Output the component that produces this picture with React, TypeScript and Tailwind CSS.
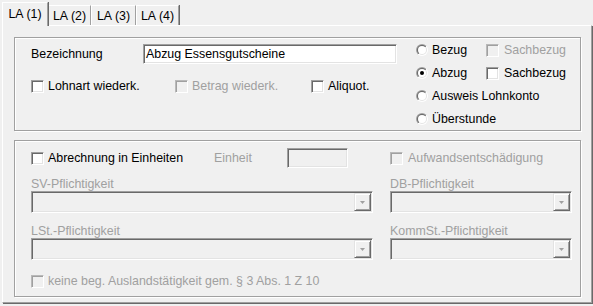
import React from "react";

const Check = ({ disabled = false }: { disabled?: boolean }) => (
  <span
    className={
      disabled
        ? "inline-block shrink-0 w-[13px] h-[13px] border border-t-[#b9b9b9] border-l-[#b9b9b9] border-r-white border-b-white shadow-[inset_1px_1px_0_#a0a0a0] bg-[#f0f0f0]"
        : "inline-block shrink-0 w-[13px] h-[13px] border border-t-[#a0a0a0] border-l-[#a0a0a0] border-r-white border-b-white shadow-[inset_1px_1px_0_#696969,inset_-1px_-1px_0_#e3e3e3] bg-white"
    }
  />
);

const Radio = ({ checked = false, id }: { checked?: boolean; id: string }) => (
  <svg width="12" height="12" viewBox="0 0 12 12" className="shrink-0">
    <defs>
      <linearGradient id={`o${id}`} x1="0" y1="0" x2="1" y2="1">
        <stop offset="0.5" stopColor="#a0a0a0" />
        <stop offset="0.5" stopColor="#ffffff" />
      </linearGradient>
      <linearGradient id={`i${id}`} x1="0" y1="0" x2="1" y2="1">
        <stop offset="0.5" stopColor="#696969" />
        <stop offset="0.5" stopColor="#e3e3e3" />
      </linearGradient>
    </defs>
    <circle cx="6" cy="6" r="6" fill={`url(#o${id})`} />
    <circle cx="6" cy="6" r="5" fill={`url(#i${id})`} />
    <circle cx="6" cy="6" r="4" fill="#ffffff" />
    {checked && <circle cx="6" cy="6" r="2" fill="#000000" />}
  </svg>
);

const Combo = () => (
  <div className="h-[22px] w-full flex justify-end border border-t-[#a0a0a0] border-l-[#a0a0a0] border-r-white border-b-white shadow-[inset_1px_1px_0_#696969,inset_-1px_-1px_0_#e3e3e3] bg-[#f0f0f0] p-[1px]">
    <div className="w-[17px] h-full flex items-center justify-center border border-t-[#e3e3e3] border-l-[#e3e3e3] border-r-[#696969] border-b-[#696969] shadow-[inset_1px_1px_0_#ffffff,inset_-1px_-1px_0_#a0a0a0] bg-[#f0f0f0]">
      <svg width="5" height="3" viewBox="0 0 5 3">
        <path d="M0 0h5L2.5 3z" fill="#a0a0a0" />
      </svg>
    </div>
  </div>
);

const Tab = ({ label, selected = false, w }: { label: string; selected?: boolean; w: string }) => (
  <div
    className={
      selected
        ? `${w} h-[24px] -mb-px relative z-10 bg-[#f0f0f0] border-t border-l border-t-white border-l-white border-r border-r-[#a0a0a0] shadow-[1px_0_0_#696969] flex items-center justify-center pb-[2px]`
        : `${w} h-[20px] bg-[#f0f0f0] border-t border-l border-t-white border-l-white border-r border-r-[#a0a0a0] shadow-[1px_0_0_#696969] flex items-center justify-center`
    }
  >
    {label}
  </div>
);

export default function App() {
  return (
    <div className="w-[593px] h-[306px] bg-[#f0f0f0] font-['Liberation_Sans',Arial,sans-serif] text-[12.4px] leading-[14px] text-black overflow-hidden select-none">
      <div className="h-[25px] flex items-end pl-[2px]">
        <Tab label="LA (1)" selected w="w-[46px]" />
        <Tab label="LA (2)" w="w-[43px]" />
        <Tab label="LA (3)" w="w-[45px]" />
        <Tab label="LA (4)" w="w-[43px]" />
      </div>
      <div className="ml-[2px] w-[590px] h-[278px] border border-t-white border-l-white border-r-[#a0a0a0] border-b-[#a0a0a0] shadow-[1px_1px_0_#696969] pl-[11px] pt-[11px]">
        {/* Group 1 */}
        <div className="w-[567px] h-[94px] border border-[#a0a0a0] shadow-[inset_1px_1px_0_#ffffff,1px_1px_0_#ffffff] flex">
          <div className="pl-[16px] pt-[6px] flex flex-col">
            <div className="h-[20px] flex items-center">
              <span className="w-[112px]">Bezeichnung</span>
              <div className="w-[254px] h-[20px] border border-t-[#a0a0a0] border-l-[#a0a0a0] border-r-white border-b-white shadow-[inset_1px_1px_0_#696969,inset_-1px_-1px_0_#e3e3e3] bg-white flex items-center pl-[2px]">
                Abzug Essensgutscheine
              </div>
            </div>
            <div className="mt-[12px] h-[20px] flex items-center">
              <div className="w-[144px] flex items-center gap-[4px]">
                <Check />
                <span>Lohnart wiederk.</span>
              </div>
              <div className="w-[136px] flex items-center gap-[4px] text-[#a0a0a0]">
                <Check disabled />
                <span>Betrag wiederk.</span>
              </div>
              <div className="flex items-center gap-[4px]">
                <Check />
                <span>Aliquot.</span>
              </div>
            </div>
          </div>
          <div className="ml-[19px] pt-[1px] flex flex-col">
            <div className="h-[23px] flex items-center">
              <Radio id="r1" />
              <span className="ml-[4px] w-[54px]">Bezug</span>
              <Check disabled />
              <span className="ml-[5px] text-[#a0a0a0]">Sachbezug</span>
            </div>
            <div className="h-[23px] flex items-center">
              <Radio id="r2" checked />
              <span className="ml-[4px] w-[54px]">Abzug</span>
              <Check />
              <span className="ml-[5px]">Sachbezug</span>
            </div>
            <div className="h-[23px] flex items-center">
              <Radio id="r3" />
              <span className="ml-[4px]">Ausweis Lohnkonto</span>
            </div>
            <div className="h-[23px] flex items-center">
              <Radio id="r4" />
              <span className="ml-[4px]">Überstunde</span>
            </div>
          </div>
        </div>

        {/* Group 2 */}
        <div className="mt-[9px] w-[567px] h-[157px] border border-[#a0a0a0] shadow-[inset_1px_1px_0_#ffffff,1px_1px_0_#ffffff] pl-[16px] pt-[7px]">
          <div className="h-[20px] flex items-center">
            <div className="w-[183px] flex items-center gap-[4px]">
              <Check />
              <span>Abrechnung in Einheiten</span>
            </div>
            <span className="w-[73px] text-[#a0a0a0]">Einheit</span>
            <div className="w-[61px] h-[20px] border border-t-[#a0a0a0] border-l-[#a0a0a0] border-r-white border-b-white shadow-[inset_1px_1px_0_#696969,inset_-1px_-1px_0_#e3e3e3] bg-[#f0f0f0]" />
            <div className="ml-[42px] flex items-center gap-[5px] text-[#a0a0a0]">
              <Check disabled />
              <span>Aufwandsentschädigung</span>
            </div>
          </div>
          <div className="grid grid-cols-[342px_182px] gap-x-[17px] text-[#a0a0a0]">
            <div className="mt-[9px] h-[14px]">SV-Pflichtigkeit</div>
            <div className="mt-[9px] h-[14px]">DB-Pflichtigkeit</div>
            <Combo />
            <Combo />
            <div className="mt-[11px] h-[14px]">LSt.-Pflichtigkeit</div>
            <div className="mt-[11px] h-[14px]">KommSt.-Pflichtigkeit</div>
            <Combo />
            <Combo />
          </div>
          <div className="mt-[14px] h-[14px] flex items-center gap-[4px] text-[#a0a0a0]">
            <Check disabled />
            <span>keine beg. Auslandstätigkeit gem. § 3 Abs. 1 Z 10</span>
          </div>
        </div>
      </div>
    </div>
  );
}
